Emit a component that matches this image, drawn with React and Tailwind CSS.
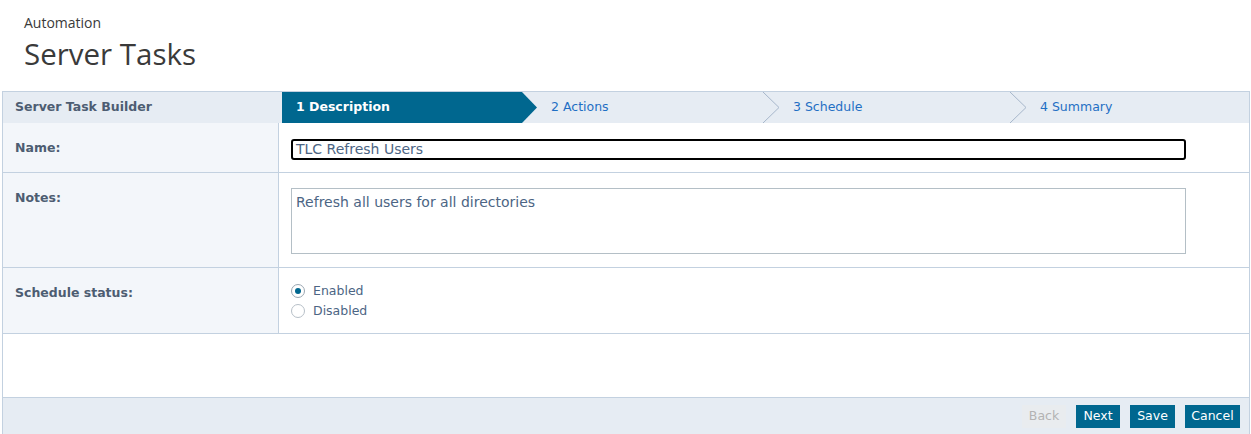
import React from "react";

const body = { fontFamily: '"DejaVu Sans", Verdana, sans-serif' };

function Chevron() {
  return (
    <svg className="absolute left-0 top-0 h-full" width="17" height="31" viewBox="0 0 17 31" preserveAspectRatio="none">
      <polyline points="0,0 16,15.5 0,31" fill="none" stroke="#a7b7cb" strokeWidth="1" />
    </svg>
  );
}

function Step({ label, width, chevron }) {
  return (
    <div className={`relative flex h-full items-center text-[12.5px] text-[#1f6fc4] ${width}`} style={{ paddingLeft: chevron ? 30 : 29 }}>
      {chevron && <Chevron />}
      {label}
    </div>
  );
}

function Row({ label, children, className }) {
  return (
    <div className={`flex border-b border-[#c3d1e0] ${className}`}>
      <div className="w-[276px] shrink-0 border-r border-[#c3d1e0] bg-[#f3f6fa] pl-[12px] pt-[16px] text-[12.5px] font-bold text-[#4d5d72]">
        {label}
      </div>
      <div className="flex-1 pl-[12px]">{children}</div>
    </div>
  );
}

export default function App() {
  return (
    <div className="h-[434px] w-[1251px] overflow-hidden bg-white" style={body}>
      <div className="px-[24px] pt-[13px]" style={{ fontFamily: '"Open Sans", sans-serif' }}>
        <div className="text-[14px] leading-[20px] text-[#3a3a3a]">Automation</div>
        <div className="mt-[2px] text-[29.5px] leading-[38px] text-[#3a3a3a]">Server Tasks</div>
      </div>

      <div className="ml-[2px] mr-[1px] mt-[18px] flex h-[344px] flex-col border border-[#c3d1e0]">
        {/* wizard steps */}
        <div className="flex h-[31px] shrink-0 items-center bg-[#e6ecf3]">
          <div className="w-[279px] pl-[12px] text-[12.5px] font-bold text-[#4d5d72]">Server Task Builder</div>
          <div className="relative flex h-full w-[240px] items-center bg-[#00678f] pl-[14px] text-[12.5px] font-bold text-white">
            1 Description
            <svg className="absolute right-[-15px] top-0 h-full" width="15" height="31" viewBox="0 0 15 31" preserveAspectRatio="none">
              <polygon points="0,0 15,15.5 0,31" fill="#00678f" />
            </svg>
          </div>
          <Step label="2 Actions" width="w-[241px]" />
          <Step label="3 Schedule" width="w-[247px]" chevron />
          <Step label="4 Summary" width="flex-1" chevron />
        </div>

        <Row label="Name:" className="h-[50px]">
          <div className="mt-[16px] flex h-[21px] w-[895px] items-center rounded-[3px] border-2 border-black pl-[3px] text-[14px] text-[#4c6584]">
            TLC Refresh Users
          </div>
        </Row>

        <Row label="Notes:" className="h-[95px]">
          <div className="mt-[15px] h-[66px] w-[895px] border border-[#b4bfc6] px-[4px] pt-[3px] text-[14px] text-[#4c6584]">
            Refresh all users for all directories
          </div>
        </Row>

        <Row label="Schedule status:" className="h-[66px]">
          <div className="pt-[13px] text-[12.5px] text-[#4c6584]">
            <label className="flex h-[20px] items-center gap-[8px]">
              <span className="flex h-[14px] w-[14px] items-center justify-center rounded-full border border-[#9aa6b1] bg-white">
                <span className="h-[6px] w-[6px] rounded-full bg-[#00678f]" />
              </span>
              Enabled
            </label>
            <label className="flex h-[20px] items-center gap-[8px]">
              <span className="h-[14px] w-[14px] rounded-full border border-[#b7c0c8] bg-white" />
              Disabled
            </label>
          </div>
        </Row>

        <div className="flex-1" />

        <div className="flex h-[37px] shrink-0 items-center justify-end gap-[10px] border-t border-[#c3d1e0] bg-[#e6ecf3] pr-[9px] text-[12.5px]">
          <button className="h-[23px] w-[44px] bg-[#e9ecef] text-[#b3b3b3]">Back</button>
          <button className="h-[23px] w-[44px] bg-[#00678f] text-white">Next</button>
          <button className="h-[23px] w-[45px] bg-[#00678f] text-white">Save</button>
          <button className="h-[23px] w-[55px] bg-[#00678f] text-white">Cancel</button>
        </div>
      </div>
    </div>
  );
}
